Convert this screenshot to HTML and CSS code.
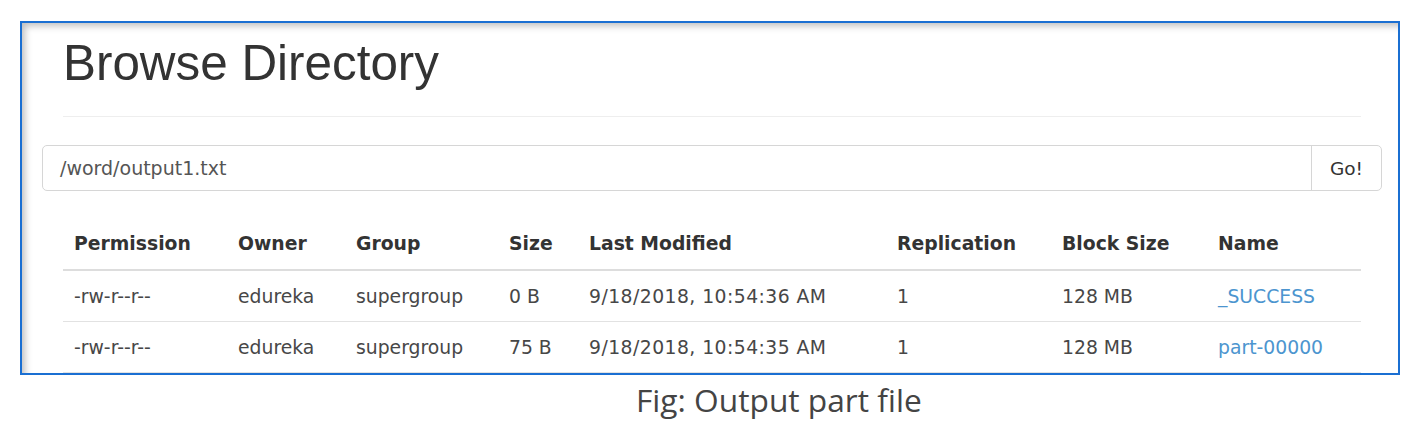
FILE: index.html
```html
<!DOCTYPE html>
<html>
<head>
<meta charset="utf-8">
<link rel="stylesheet" href="styles.css">
</head>
<body>
<div class="frame">
  <div class="page-header">
    <h1 class="title">Browse Directory</h1>
    <div class="divider"></div>
  </div>
  <div class="input-group">
    <div class="path-input">/word/output1.txt</div>
    <div class="go-btn">Go!</div>
  </div>
  <div class="table-wrap">
    <table class="listing">
      <colgroup>
        <col class="c-perm"><col class="c-owner"><col class="c-group"><col class="c-size">
        <col class="c-mod"><col class="c-rep"><col class="c-block"><col class="c-name">
      </colgroup>
      <thead>
        <tr>
          <th>Permission</th><th>Owner</th><th>Group</th><th>Size</th>
          <th>Last Modified</th><th>Replication</th><th>Block Size</th><th>Name</th>
        </tr>
      </thead>
      <tbody>
        <tr>
          <td>-rw-r--r--</td><td>edureka</td><td>supergroup</td><td>0 B</td>
          <td class="date">9/18/2018, 10:54:36 AM</td><td>1</td><td>128 MB</td><td><a class="link">_SUCCESS</a></td>
        </tr>
        <tr>
          <td>-rw-r--r--</td><td>edureka</td><td>supergroup</td><td>75 B</td>
          <td class="date">9/18/2018, 10:54:35 AM</td><td>1</td><td>128 MB</td><td><a class="link">part-00000</a></td>
        </tr>
      </tbody>
    </table>
  </div>
</div>
<div class="caption">Fig: Output part file</div>
</body>
</html>
```

FILE: styles.css
```css
html, body {
  margin: 0;
  padding: 0;
  background: #ffffff;
}

.frame {
  box-sizing: border-box;
  margin: 21px 0 0 20px;
  width: 1380px;
  height: 354px;
  border: 2px solid #1a6fd2;
  padding: 0 16px 0 20px;
  overflow: hidden;
  box-shadow: inset 5px 5px 7px -2px rgba(0, 0, 0, 0.25);
  background: #fff;
}

.page-header {
  margin: 0 21px;
}

.title {
  margin: 12px 0 0 0;
  font-family: "Liberation Sans", Arial, sans-serif;
  font-weight: normal;
  font-size: 49.4px;
  line-height: 55px;
  color: #333;
}

.divider {
  margin-top: 26px;
  height: 1px;
  background: #eeeeee;
}

.input-group {
  margin-top: 28px;
  display: flex;
  height: 46px;
  box-sizing: border-box;
  border: 1px solid #d6d6d6;
  border-radius: 5px;
  font-family: "DejaVu Sans", sans-serif;
  font-size: 19px;
  color: #555;
}

.path-input {
  flex: 1;
  display: flex;
  align-items: center;
  padding-left: 17px;
}

.go-btn {
  width: 69px;
  border-left: 1px solid #d6d6d6;
  display: flex;
  align-items: center;
  justify-content: center;
  color: #333;
  font-size: 18.5px;
}

.table-wrap {
  margin: 26px 21px 0 21px;
}

.listing {
  width: 1298px;
  table-layout: fixed;
  border-collapse: collapse;
  font-family: "DejaVu Sans", sans-serif;
  font-size: 18.8px;
  color: #474747;
}

.c-perm { width: 164px; }
.c-owner { width: 118px; }
.c-group { width: 153px; }
.c-size { width: 80px; }
.c-mod { width: 308px; }
.c-rep { width: 165px; }
.c-block { width: 156px; }
.c-name { width: 154px; }

.listing th {
  text-align: left;
  font-weight: bold;
  color: #333;
  height: 52px;
  padding: 0 0 0 11px;
  vertical-align: middle;
  border-bottom: 2px solid #dddddd;
  white-space: nowrap;
}

.listing td {
  height: 50px;
  padding: 0 0 0 11px;
  vertical-align: middle;
  border-bottom: 1px solid #e2e2e2;
  white-space: nowrap;
}

.listing td.date {
  letter-spacing: 0.45px;
}

.link {
  color: #4c95cf;
  text-decoration: none;
}

.caption {
  margin: 5px 0 0 636px;
  font-family: "Open Sans", sans-serif;
  font-size: 31.7px;
  line-height: 40px;
  color: #444;
}
```
